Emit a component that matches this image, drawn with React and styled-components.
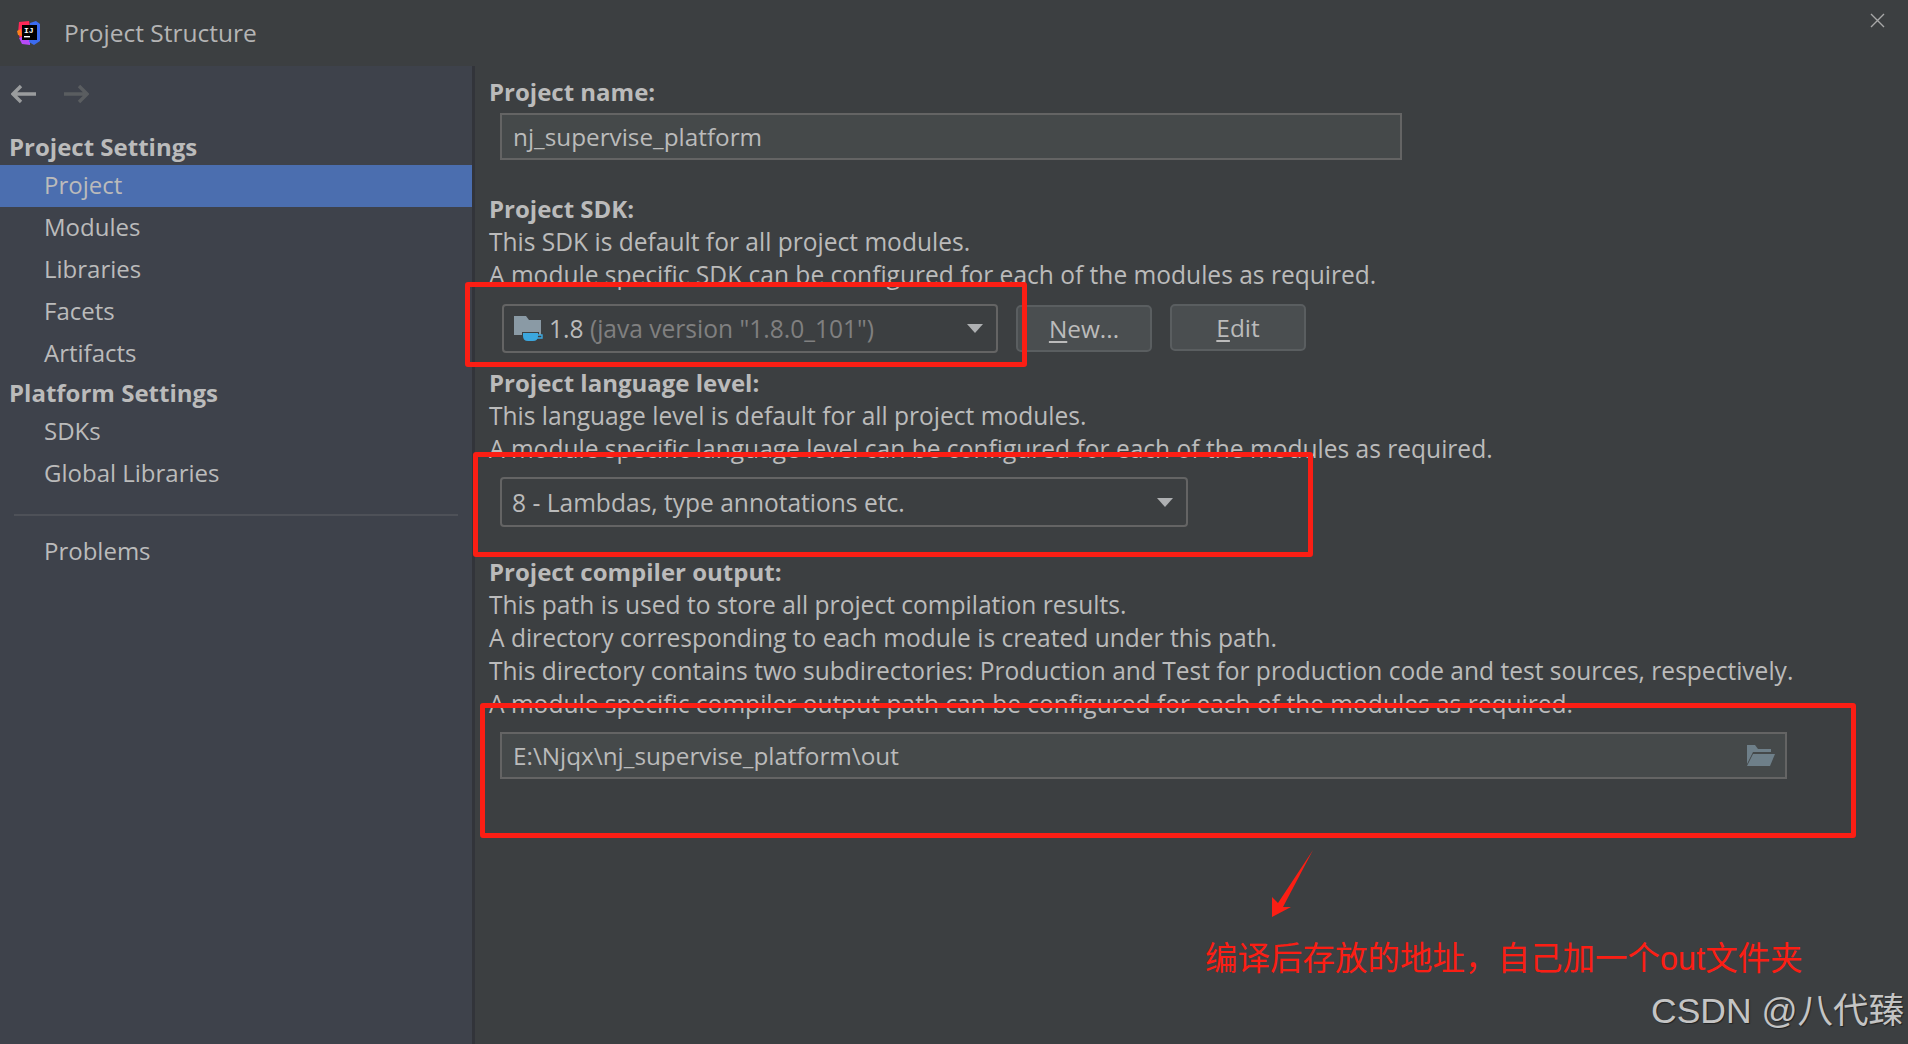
import React from "react";
import styled, { createGlobalStyle } from "styled-components";

const GlobalStyle = createGlobalStyle`
  html, body {
    margin: 0;
    padding: 0;
    background: #3c3f41;
    overflow: hidden;
  }
`;

const Window = styled.div`
  position: relative;
  width: 1908px;
  height: 1044px;
  overflow: hidden;
  background: #3c3f41;
  color: #bbbbbb;
  font: 24px/33px "Open Sans", "Noto Sans", sans-serif;
`;

const TitleBar = styled.header`
  height: 66px;
  display: flex;
  align-items: center;
  padding-left: 17px;
  gap: 23px;
  position: relative;
`;

const TitleText = styled.span`
  font-size: 24.5px;
  color: #b4b4b4;
  transform: translateY(-1px);
`;

const CloseButton = styled.svg`
  position: absolute;
  top: 13px;
  right: 23px;
  width: 15px;
  height: 15px;
`;

const Body = styled.div`
  display: flex;
  height: 978px;
`;

const Sidebar = styled.nav`
  width: 472px;
  flex: none;
  background: #3e424b;
  border-right: 3px solid #32343a;
  padding-top: 12px;
`;

const NavArrows = styled.div`
  display: flex;
  gap: 26px;
  padding-left: 11px;
  height: 32px;
  align-items: center;
  margin-bottom: 19px;
`;

const GroupTitle = styled.div`
  font-weight: 700;
  padding-left: 9px;
  height: 36px;
  line-height: 35px;
  color: #bbbbbb;
`;

const NavItem = styled.div`
  height: 42px;
  line-height: 40px;
  padding-left: 44px;
  background: ${(p) => (p.$active ? "#4b6eaf" : "transparent")};
`;

const Divider = styled.div`
  height: 2px;
  margin: 19px 14px 15px 14px;
  background: #4e5158;
`;

const Content = styled.main`
  flex: 1;
  padding: 9px 0 0 14px;
  display: flex;
  flex-direction: column;
`;

const Label = styled.div`
  font-weight: 700;
`;

const Hint = styled.div`
  white-space: nowrap;
  font-size: 24.55px;
`;

const Section = styled.section`
  margin-top: ${(p) => p.$top}px;
`;

const TextField = styled.div`
  box-sizing: border-box;
  width: ${(p) => p.$width}px;
  height: ${(p) => p.$height || 48}px;
  margin: ${(p) => p.$margin || "0"};
  display: flex;
  align-items: center;
  justify-content: space-between;
  padding: 0 10px 0 11px;
  font-size: 24.3px;
  background: #45494a;
  border: 2px solid #646464;
`;

const ComboRow = styled.div`
  display: flex;
  align-items: center;
  margin: 13px 0 0 13px;
  gap: 18px;
`;

const Combo = styled.div`
  box-sizing: border-box;
  width: ${(p) => p.$width}px;
  height: ${(p) => p.$height}px;
  margin: ${(p) => p.$margin || "0"};
  display: flex;
  align-items: center;
  padding: 0 13px 0 10px;
  border: 2px solid #646464;
  border-radius: 4px;
  background: #3c3f41;
  font-size: 24.55px;
`;

const ComboText = styled.span`
  flex: 1;
  white-space: nowrap;
`;

const Muted = styled.span`
  color: #808080;
`;

const Caret = styled.span`
  width: 0;
  height: 0;
  border-left: 8px solid transparent;
  border-right: 8px solid transparent;
  border-top: 9px solid #aeb0b2;
`;

const Button = styled.div`
  box-sizing: border-box;
  width: 136px;
  height: ${(p) => p.$height}px;
  display: flex;
  align-items: center;
  justify-content: center;
  border: 2px solid #5a5e60;
  border-radius: 5px;
  background: #4a4e50;
  font-size: 24.4px;
  transform: translateY(${(p) => p.$shift || 0}px);
`;

const Mnemonic = styled.span`
  text-decoration: underline;
  text-underline-offset: 3px;
`;

const RedBox = styled.div`
  position: absolute;
  box-sizing: border-box;
  left: ${(p) => p.$x}px;
  top: ${(p) => p.$y}px;
  width: ${(p) => p.$w}px;
  height: ${(p) => p.$h}px;
  border: 5px solid #fb1e14;
  border-radius: 3px;
  background: transparent;
`;

const RedArrow = styled.svg`
  position: absolute;
  left: 1262px;
  top: 845px;
  width: 60px;
  height: 80px;
`;

const Note = styled.div`
  position: absolute;
  left: 1205px;
  top: 937px;
  font: 32.5px/44px "Liberation Sans", "Noto Sans CJK SC", sans-serif;
  color: #fb1e14;
  white-space: nowrap;
`;

const Watermark = styled.div`
  position: absolute;
  left: 1651px;
  top: 988px;
  font: 35.5px/46px "Liberation Sans", "Noto Sans CJK SC", sans-serif;
  color: #c4c4c4;
  text-shadow: 1px 1px 1px rgba(0, 0, 0, 0.45);
  white-space: nowrap;
`;

const Logo = () => (
  <svg width="24" height="24" viewBox="0 0 24 24">
    <path d="M2 1 L12 0 L13 6 L4 20 L1 12 Z" fill="#fe2857" />
    <path d="M0 10 L4 8 L5 15 L1 14 Z" fill="#fc801d" />
    <path d="M2 17 L13 13 L13 24 L5 23 Z" fill="#b74af7" />
    <path d="M13 2 L19 0 L23 3 L23 20 L17 24 L12 21 Z" fill="#3b6bf0" />
    <rect x="5" y="4" width="15" height="15" fill="#000" />
    <text x="7" y="12" fontSize="8" fontWeight="700" fontFamily="Liberation Mono, monospace" fill="#fff">
      IJ
    </text>
    <rect x="7" y="15" width="6" height="1.4" fill="#fff" />
  </svg>
);

const ArrowIcon = ({ color, flip }) => (
  <svg width="26" height="20" viewBox="0 0 26 20" style={flip ? { transform: "scaleX(-1)" } : undefined}>
    <path d="M10 2 L2 10 L10 18 M3 10 H25" fill="none" stroke={color} strokeWidth="3.4" />
  </svg>
);

const SdkIcon = () => (
  <svg width="30" height="30" viewBox="0 0 30 30" style={{ marginRight: 5, flex: "none" }}>
    <path d="M0 2 H12 L15 6 H27 V21 H0 Z" fill="#8a9aa5" />
    <path d="M8 18 H25 V22 Q25 29 20 29 H13 Q8 29 8 22 Z" fill="#3c3f41" />
    <path d="M9 19 H24 V22 Q24 27 19 27 H14 Q9 27 9 22 Z" fill="#3ba7de" />
    <path d="M24 21 H28 V24 H23" fill="none" stroke="#3ba7de" strokeWidth="1.4" />
  </svg>
);

const FolderIcon = () => (
  <svg width="29" height="23" viewBox="0 0 29 23">
    <path d="M1 1 H9 L12 5 H25 V8 H7 L1 20 Z" fill="#6e7f89" />
    <path d="M7 10 H29 L24 22 H1 Z" fill="#6e7f89" />
  </svg>
);

export default function App() {
  return (
    <>
      <GlobalStyle />
      <Window>
        <TitleBar>
          <Logo />
          <TitleText>Project Structure</TitleText>
          <CloseButton viewBox="0 0 15 15">
            <path d="M1 1 L14 14 M14 1 L1 14" stroke="#a8a8a8" strokeWidth="1.4" />
          </CloseButton>
        </TitleBar>
        <Body>
          <Sidebar>
            <NavArrows>
              <ArrowIcon color="#9a9c9e" />
              <ArrowIcon color="#5a5d60" flip />
            </NavArrows>
            <GroupTitle>Project Settings</GroupTitle>
            <NavItem $active>Project</NavItem>
            <NavItem>Modules</NavItem>
            <NavItem>Libraries</NavItem>
            <NavItem>Facets</NavItem>
            <NavItem>Artifacts</NavItem>
            <GroupTitle>Platform Settings</GroupTitle>
            <NavItem>SDKs</NavItem>
            <NavItem>Global Libraries</NavItem>
            <Divider />
            <NavItem>Problems</NavItem>
          </Sidebar>
          <Content>
            <Label>Project name:</Label>
            <TextField $width={902} $height={47} $margin="5px 0 0 11px">
              nj_supervise_platform
            </TextField>
            <Section $top={32}>
              <Label>Project SDK:</Label>
              <Hint>This SDK is default for all project modules.</Hint>
              <Hint>A module specific SDK can be configured for each of the modules as required.</Hint>
            </Section>
            <ComboRow>
              <Combo $width={496} $height={49}>
                <SdkIcon />
                <ComboText>
                  1.8 <Muted>(java version "1.8.0_101")</Muted>
                </ComboText>
                <Caret />
              </Combo>
              <Button $height={47}>
                <span>
                  <Mnemonic>N</Mnemonic>ew...
                </span>
              </Button>
              <Button $height={47} $shift={-1}>
                <span>
                  <Mnemonic>E</Mnemonic>dit
                </span>
              </Button>
            </ComboRow>
            <Section $top={13}>
              <Label>Project language level:</Label>
              <Hint>This language level is default for all project modules.</Hint>
              <Hint>A module specific language level can be configured for each of the modules as required.</Hint>
            </Section>
            <Combo $width={688} $height={50} $margin="12px 0 0 11px">
              <ComboText>8 - Lambdas, type annotations etc.</ComboText>
              <Caret />
            </Combo>
            <Section $top={28}>
              <Label>Project compiler output:</Label>
              <Hint>This path is used to store all project compilation results.</Hint>
              <Hint>A directory corresponding to each module is created under this path.</Hint>
              <Hint>This directory contains two subdirectories: Production and Test for production code and test sources, respectively.</Hint>
              <Hint>A module specific compiler output path can be configured for each of the modules as required.</Hint>
            </Section>
            <TextField $width={1287} $height={47} $margin="12px 0 0 11px">
              <span>E:\Njqx\nj_supervise_platform\out</span>
              <FolderIcon />
            </TextField>
          </Content>
        </Body>
        <RedBox $x={465} $y={282} $w={562} $h={85} />
        <RedBox $x={473} $y={452} $w={840} $h={105} />
        <RedBox $x={480} $y={703} $w={1376} $h={135} />
        <RedArrow viewBox="0 0 60 80">
          <path d="M51 5 L21 62 L29 62 L10 72 L10 52 L16 58 Z" fill="#fb1e14" />
        </RedArrow>
        <Note>编译后存放的地址，自己加一个out文件夹</Note>
        <Watermark>CSDN @八代臻</Watermark>
      </Window>
    </>
  );
}
